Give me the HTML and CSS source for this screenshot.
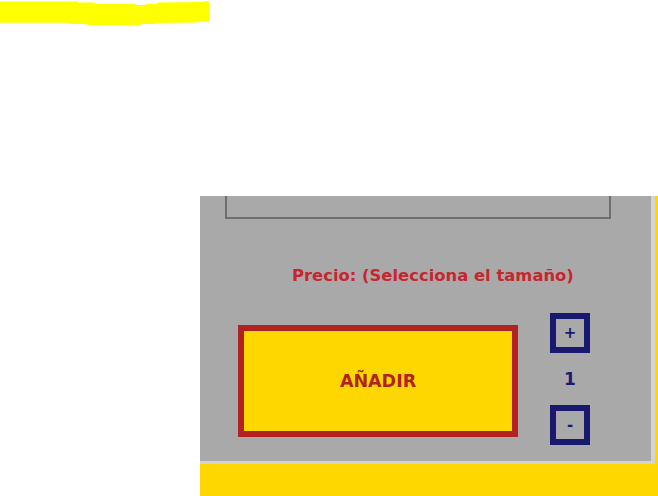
FILE: index.html
```html
<!DOCTYPE html>
<html lang="es">
<head>
<meta charset="utf-8">
<link rel="stylesheet" href="styles.css">
</head>
<body>
<div class="top">
  <svg class="highlight" width="212" height="27" viewBox="0 0 212 27">
    <polygon fill="#ffff00" points="0,1.5 77,1.5 78,2.5 95,2.5 96,4 135,4 136,5 145,5 146,4 157,4 158,2.5 200,2 209,1 209,22 201,21.5 196,22.5 156,23 155,24 142,24 141,25.3 108,25.5 87,25 86,24 70,24 69,22.7 0,22.7"/>
  </svg>
</div>
<div class="stage">
  <div class="panel">
    <div class="notes"></div>
    <p class="price">Precio: (Selecciona el tamaño)</p>
    <div class="controls">
      <button class="add">AÑADIR</button>
      <div class="counter">
        <button class="step">+</button>
        <span class="qty">1</span>
        <button class="step">-</button>
      </div>
    </div>
  </div>
</div>
</body>
</html>
```
FILE: styles.css
```css
html, body {
  margin: 0;
  padding: 0;
  background: #ffffff;
}
body {
  width: 658px;
  height: 496px;
  overflow: hidden;
  font-family: "DejaVu Sans", "Noto Sans", sans-serif;
}
.top {
  height: 196px;
}
.highlight {
  display: block;
}
.stage {
  margin-left: 200px;
  width: 455px;
  padding: 0 3px 32px 0;
  background: #ffd700;
}
.panel {
  background: #a9a9a9;
  border-right: 4px solid #d3d3d3;
  border-bottom: 3px solid #d3d3d3;
  height: 265px;
  display: flex;
  flex-direction: column;
}
.notes {
  margin-left: 25px;
  width: 382px;
  height: 21px;
  border: 2px solid #6f6f6f;
  border-top: none;
}
.price {
  margin: 47px 0 0 92px;
  line-height: 20px;
  font-size: 16.4px;
  font-weight: 700;
  color: #c8262e;
}
.controls {
  display: flex;
  align-items: flex-start;
  margin-top: 27px;
}
.add {
  margin: 12px 0 0 38px;
  width: 280px;
  height: 112px;
  box-sizing: border-box;
  background: #ffd700;
  border: 6px solid #b22222;
  color: #b22222;
  font-family: inherit;
  font-size: 17.5px;
  font-weight: 700;
  padding: 0;
}
.counter {
  margin-left: 32px;
  display: flex;
  flex-direction: column;
  align-items: center;
}
.step {
  width: 40px;
  height: 40px;
  box-sizing: border-box;
  border: 6px solid #191970;
  background: transparent;
  color: #191970;
  font-family: inherit;
  font-size: 15px;
  font-weight: 700;
  padding: 0;
  line-height: 1;
}
.qty {
  height: 52px;
  display: flex;
  align-items: center;
  color: #191970;
  font-size: 17px;
  font-weight: 700;
}
```
